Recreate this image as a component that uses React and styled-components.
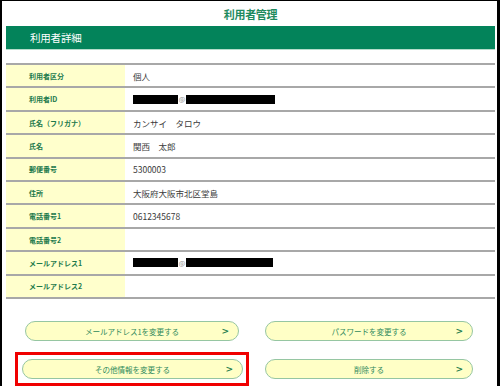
import styled, { createGlobalStyle } from "styled-components"

const GlobalStyle = createGlobalStyle`
    html, body {
        margin: 0;
        padding: 0;
        background: #FFFFFF;
        overflow: hidden;
    }
    body {
        font-family: 'Noto Sans CJK JP', 'Noto Sans', sans-serif;
    }
`

const rows = [
    { label: "利用者区分", value: "個人" },
    { label: "利用者ID", mail: true },
    { label: "氏名（フリガナ）", value: "カンサイ　タロウ" },
    { label: "氏名", value: "関西　太郎" },
    { label: "郵便番号", value: "5300003" },
    { label: "住所", value: "大阪府大阪市北区堂島" },
    { label: "電話番号1", value: "0612345678" },
    { label: "電話番号2", value: "" },
    { label: "メールアドレス1", mail: true },
    { label: "メールアドレス2", value: "" },
]

const buttons = [
    { text: "メールアドレス1を変更する" },
    { text: "パスワードを変更する" },
    { text: "その他情報を変更する", marked: true },
    { text: "削除する" },
]

export default function App() {
    return (
        <>
            <GlobalStyle />
            <Frame>
                <PageTitle>利用者管理</PageTitle>
                <SectionBar>利用者詳細</SectionBar>

                <DetailTable>
                    {rows.map(row =>
                        <Row key={row.label}>
                            <Label>{row.label}</Label>
                            <Value>
                                {row.mail ?
                                    <>
                                        <Redacted w={45} />
                                        <At>@</At>
                                        <Redacted w={row.label === "利用者ID" ? 89 : 87} />
                                    </>
                                    : row.value}
                            </Value>
                        </Row>
                    )}
                </DetailTable>

                <ButtonGrid>
                    {buttons.map(b =>
                        <ButtonCell key={b.text} marked={b.marked}>
                            <PillButton>
                                <span>{b.text}</span>
                                <Chevron>&gt;</Chevron>
                            </PillButton>
                        </ButtonCell>
                    )}
                </ButtonGrid>
            </Frame>
        </>
    )
}

const Frame = styled.div`
    height: 385px;
    border-left: 2px solid #000;
    border-top: 1px solid #000;
    border-right: 3px solid #000;
    padding: 0 2px 0 4px;
    box-sizing: content-box;
    width: 489px;
    display: flex;
    flex-direction: column;
    overflow: hidden;
`
const PageTitle = styled.div`
    height: 26px;
    display: flex;
    align-items: center;
    justify-content: center;
    font-size: 11px;
    font-weight: 700;
    color: #1E8A5E;
    letter-spacing: -0.3px;
`
const SectionBar = styled.div`
    height: 24px;
    background-color: #03835A;
    border-bottom: 1px solid #B5DCCB;
    color: #FFFFFF;
    font-size: 10.5px;
    display: flex;
    align-items: center;
    padding-left: 24px;
    letter-spacing: -0.2px;
`
const DetailTable = styled.div`
    margin-top: 13px;
    border-top: 2px solid #A8A8A8;
    display: flex;
    flex-direction: column;
`
const Row = styled.div`
    display: grid;
    grid-template-columns: 119px 1fr;
    height: 21.4px;
    border-bottom: 2px solid #A8A8A8;
`
const Label = styled.div`
    background-color: #FFFFCC;
    color: #1D7A4C;
    font-size: 7px;
    font-weight: 700;
    display: flex;
    align-items: center;
    padding-left: 23px;
`
const Value = styled.div`
    color: #3A3A3A;
    font-size: 8.5px;
    display: flex;
    align-items: center;
    padding-left: 8px;
`
const Redacted = styled.span`
    display: inline-block;
    width: ${p => p.w}px;
    height: 9px;
    background: #000;
`
const At = styled.span`
    color: #8C8C8C;
    font-size: 7px;
    width: 8px;
    text-align: center;
`
const ButtonGrid = styled.div`
    display: grid;
    grid-template-columns: 234px 1fr;
    grid-auto-rows: 34px;
    row-gap: 4px;
    margin-top: 15px;
    padding-left: 9px;
    padding-right: 16px;
    column-gap: 9px;
`
const ButtonCell = styled.div`
    display: flex;
    align-items: center;
    padding: 0 7px;
    border: 3px solid ${p => p.marked ? '#F00000' : 'transparent'};
    box-sizing: border-box;
    & + & {
        padding: 0 3px 0 4px;
    }
`
const PillButton = styled.div`
    flex: 1;
    height: 18px;
    border: 1px solid #96C6A2;
    border-radius: 10px;
    background-color: #FFFFC6;
    display: flex;
    align-items: center;
    justify-content: center;
    position: relative;
    font-size: 7.6px;
    color: #2F8A5C;
    span {
        letter-spacing: -0.1px;
    }
`
const Chevron = styled.span`
    position: absolute;
    right: 9px;
    top: 50%;
    transform: translateY(-52%);
    font-family: 'DejaVu Sans', sans-serif;
    font-weight: 700;
    font-size: 9px;
    color: #1E7D4E;
`
